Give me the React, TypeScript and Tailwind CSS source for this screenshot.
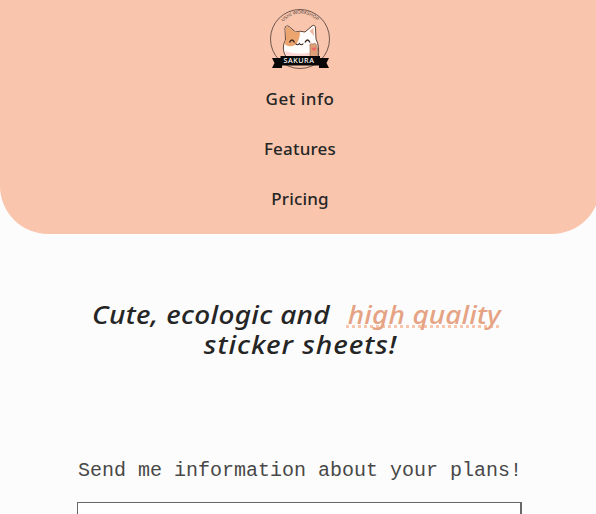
import React from "react";

function Logo() {
  return (
    <svg width="62" height="62" viewBox="0 0 62 62" role="img" aria-label="Sakura">
      <defs>
        <path id="arc" d="M10 23A22 22 0 0 1 53 23" />
      </defs>
      <circle cx="31" cy="31" r="29.500" fill="none" stroke="#4b3a35" strokeWidth=".8" />
      <text fontFamily="'Noto Sans', sans-serif" fontSize="4.600" fill="#4b3a35" textAnchor="middle">
        <textPath href="#arc" startOffset="49%">USHI WORKSHOP</textPath>
      </text>
      <path d="M18 50C14 45 13 38 16.500 32L16 20.500Q16.500 16.500 20 18.500L26.500 24Q31 22.500 36 24L43 18Q46 16 46.500 20L47 31Q51 39 49 50Z" fill="#fffdfb" stroke="#493027" strokeWidth=".9" />
      <path d="M17 31L16.500 20.500Q17.500 17.500 20 19.200L26.500 24.500L31 23.500Q31 33 26 37Q20 40 15.500 36Z" fill="#eda56f" />
      <path d="M40.500 23L44.500 19.800L45 28Z" fill="#f2b9a5" />
      <path d="M16 43Q28 48 44 44V50H18Z" fill="#fbd5d2" />
      <path d="M20.500 34.500q2.500-5 5 0M36 34.500q2.500-5 5 0" fill="none" stroke="#3a241e" strokeWidth="1.400" />
      <path d="M26.500 35.500q2 2.600 3.900 0q2 2.600 3.900 0" fill="none" stroke="#3a241e" strokeWidth="1.100" />
      <path d="M41 50V39Q40 34.500 44 36Q47 33.500 48.500 40V50Z" fill="#dda078" stroke="#8b5941" strokeWidth=".5" />
      <path d="M45 43q-3.500-2.200-1.700-3.600q1-.7 1.700.8q.8-1.500 1.900-.7q1.700 1.300-1.900 3.500Z" fill="#ef6968" />
      <path d="M3 50H13V60H3L5.500 55ZM50 50H60L57.500 55L60 60H50Z" fill="#080808" />
      <path d="M11.500 48H51V57.500H11.500Z" fill="#080808" />
      <text x="30" y="55.300" fontFamily="'Noto Sans', sans-serif" fontSize="7.200" fontWeight="500" letterSpacing=".5" fill="#fff" textAnchor="middle">SAKURA</text>
    </svg>
  );
}

export default function App() {
  return (
    <div className="h-[514px] w-full overflow-hidden bg-[#fcfcfc] text-[#252525]">
      <div className="w-[600px]">
        <header className="flex h-[234px] flex-col items-center rounded-b-[48px] bg-[#f9c5ad] pt-2">
          <Logo />
          <nav className="mt-[17px] flex flex-col items-center gap-[26px] font-['Noto_Sans',sans-serif] text-[17px] font-medium leading-6">
            <a className="tracking-[0.5px]">Get info</a>
            <a className="tracking-[0.2px]">Features</a>
            <a className="tracking-[0.15px]">Pricing</a>
          </nav>
        </header>
        <main className="flex flex-col items-center">
          <h1 className="mt-[65px] flex flex-col items-center font-['Noto_Sans',sans-serif] text-[25px] font-medium italic leading-[30px]">
            <span className="mr-[9px] flex h-[30px] w-[407px] justify-between">
              <span className="origin-left scale-x-[1.12] whitespace-nowrap tracking-[0.3px]">Cute, ecologic and</span>
              <span className="flex h-[29px] w-[153px] justify-center border-b-[3px] border-dotted border-[#f9c5ad] text-[#e5a384]">
                <span className="ml-[3px] scale-x-[1.12] whitespace-nowrap tracking-[0.1px]">high quality</span>
              </span>
            </span>
            <span className="ml-[2px] scale-x-[1.13] whitespace-nowrap tracking-[0.85px]">sticker sheets!</span>
          </h1>
          <label className="mt-[100px] whitespace-nowrap font-['Liberation_Mono',monospace] text-[20px] leading-6 text-[#484848]">Send me information about your plans!</label>
          <input className="mr-px mt-[19px] h-12 w-[445px] border border-r-2 border-[#686868] bg-white" />
        </main>
      </div>
    </div>
  );
}
